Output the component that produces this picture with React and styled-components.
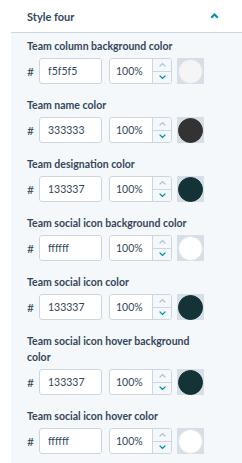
import React from "react";
import styled, { createGlobalStyle } from "styled-components";

const GlobalStyle = createGlobalStyle`
  html, body {
    margin: 0;
    padding: 0;
    background: #ffffff;
  }
  body {
    font-family: Lato, "Open Sans", sans-serif;
    color: #33475b;
  }
`;

// Contenedor principal
const Wrapper = styled.div`
  width: 242px;
  height: 463px;
  overflow: hidden;
  padding-left: 11px;
  box-sizing: border-box;
  background: #ffffff;
`;

// Cabecera del acordeón
const Header = styled.div`
  display: flex;
  align-items: center;
  justify-content: space-between;
  height: 32px;
  padding: 0 23px 0 16px;
  border-bottom: 1px solid #cbd6e2;
`;

const HeaderTitle = styled.span`
  font-size: 11px;
  font-weight: 700;
  color: #33475b;
`;

// Panel gris con los campos
const Panel = styled.div`
  background: #f5f8fa;
  padding: 5px 16px 20px 16px;
  min-height: 440px;
`;

const Field = styled.div`
  display: flex;
  flex-direction: column;
  margin-bottom: 13px;
`;

const Label = styled.label`
  font-size: 10.5px;
  font-weight: 700;
  line-height: 16px;
  max-width: 175px;
  margin-bottom: 4px;
`;

const Row = styled.div`
  display: flex;
  align-items: center;
  height: 26px;
`;

const Hash = styled.span`
  width: 12px;
  font-size: 12px;
`;

const HexInput = styled.div`
  box-sizing: border-box;
  width: 63px;
  height: 26px;
  background: #ffffff;
  border: 1px solid #cbd6e2;
  border-radius: 3px;
  font-size: 10.5px;
  display: flex;
  align-items: center;
  padding-left: 8px;
  color: #33475b;
`;

const Percent = styled.div`
  display: flex;
  margin-left: 7px;
  height: 26px;
  border: 1px solid #cbd6e2;
  border-radius: 3px;
  box-sizing: border-box;
  background: #ffffff;
  overflow: hidden;
`;

const PercentValue = styled.div`
  width: 42px;
  display: flex;
  align-items: center;
  padding-left: 6px;
  box-sizing: border-box;
  font-size: 10.5px;
`;

const Spinner = styled.div`
  width: 18px;
  display: flex;
  flex-direction: column;
  border-left: 1px solid #cbd6e2;
  background: #f5f8fa;
`;

const SpinBtn = styled.div`
  flex: 1;
  display: flex;
  align-items: center;
  justify-content: center;
  border-top: ${({ $bottom }) => ($bottom ? "1px solid #cbd6e2" : "none")};
`;

// Muestra del color sobre fondo de transparencia
const Swatch = styled.div`
  margin-left: 5px;
  width: 27px;
  height: 26px;
  display: flex;
  align-items: center;
  justify-content: center;
  background: #d6dee7;
`;

const Dot = styled.div`
  width: 25px;
  height: 25px;
  border-radius: 50%;
  box-sizing: border-box;
  background: ${({ $c }) => $c};
  border: 1px solid ${({ $c }) => ($c === "#ffffff" || $c === "#f5f5f5" ? "#dfe3eb" : $c)};
`;

const Chevron = ({ up, color }) => (
  <svg width="7" height="5" viewBox="0 0 7 5">
    <path
      d={up ? "M1 4 L3.5 1.5 L6 4" : "M1 1 L3.5 3.5 L6 1"}
      fill="none"
      stroke={color}
      strokeWidth="1.2"
      strokeLinecap="round"
    />
  </svg>
);

const fields = [
  { label: "Team column background color", hex: "f5f5f5", color: "#f5f5f5" },
  { label: "Team name color", hex: "333333", color: "#333333" },
  { label: "Team designation color", hex: "133337", color: "#133337" },
  { label: "Team social icon background color", hex: "ffffff", color: "#ffffff" },
  { label: "Team social icon color", hex: "133337", color: "#133337" },
  { label: "Team social icon hover background color", hex: "133337", color: "#133337" },
  { label: "Team social icon hover color", hex: "ffffff", color: "#ffffff" },
];

export default function App() {
  return (
    <Wrapper>
      <GlobalStyle />
      <Header>
        <HeaderTitle>Style four</HeaderTitle>
        <svg width="9" height="6" viewBox="0 0 9 6">
          <path d="M1.2 4.8 L4.5 1.5 L7.8 4.8" fill="none" stroke="#0091ae" strokeWidth="2" />
        </svg>
      </Header>
      <Panel>
        {fields.map((f) => (
          <Field key={f.label}>
            <Label>{f.label}</Label>
            <Row>
              <Hash>#</Hash>
              <HexInput>{f.hex}</HexInput>
              <Percent>
                <PercentValue>100%</PercentValue>
                <Spinner>
                  <SpinBtn>
                    <Chevron up color="#b0c1d4" />
                  </SpinBtn>
                  <SpinBtn $bottom>
                    <Chevron color="#0091ae" />
                  </SpinBtn>
                </Spinner>
              </Percent>
              <Swatch>
                <Dot $c={f.color} />
              </Swatch>
            </Row>
          </Field>
        ))}
      </Panel>
    </Wrapper>
  );
}
